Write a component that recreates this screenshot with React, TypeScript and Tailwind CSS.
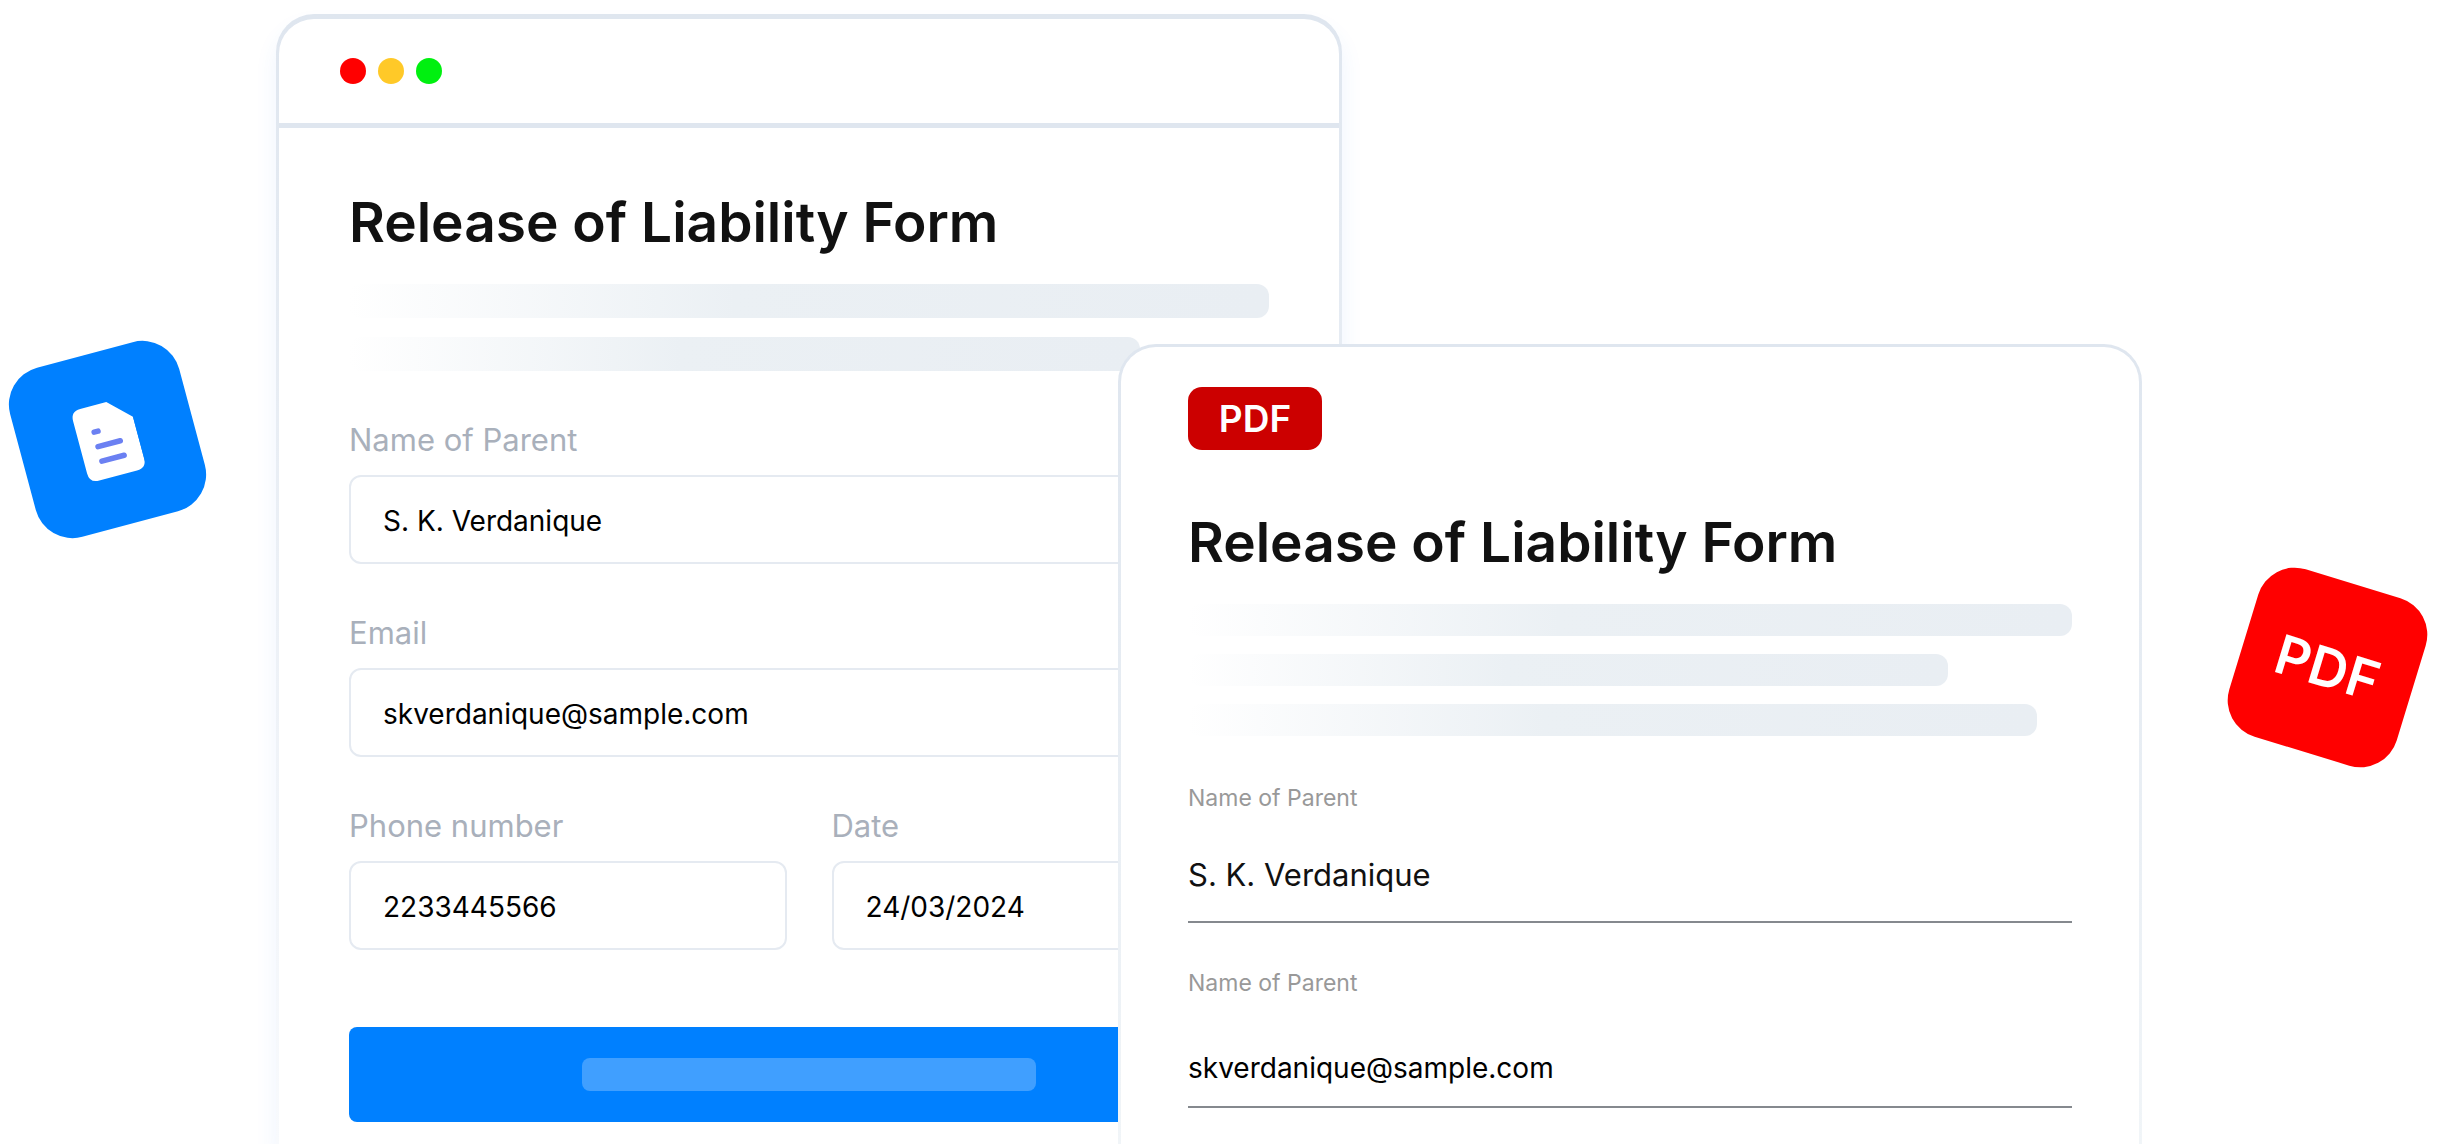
import type { ReactNode } from "react";

type FieldProps = {
  id: string;
  label: string;
  value: string;
};

function FormField({ id, label, value }: FieldProps) {
  return (
    <div className="flex min-w-0 flex-1 flex-col gap-[15px]">
      <label htmlFor={id} className="text-[31px] leading-10 text-[#a9b0bb]">
        {label}
      </label>
      <input
        id={id}
        type="text"
        defaultValue={value}
        className="h-[89px] w-full rounded-xl border-2 border-[#e5eaf1] bg-white px-8 pt-0.5 text-[28px] text-black outline-none"
      />
    </div>
  );
}

function PdfField({ id, label, value, className }: FieldProps & { className: string }) {
  return (
    <div className="flex flex-col">
      <label htmlFor={id} className="text-[23px] leading-8 text-[#999]">
        {label}
      </label>
      <input
        id={id}
        type="text"
        defaultValue={value}
        className={`h-[109px] w-full border-b-2 border-[#85898e] bg-transparent outline-none ${className}`}
      />
    </div>
  );
}

function Placeholder({ className }: { className: string }) {
  return (
    <div
      className={`rounded-xl bg-linear-to-r from-white via-[#ebf0f4] via-42% to-[#e9eef3] ${className}`}
    />
  );
}

function Tile({ className, children }: { className: string; children: ReactNode }) {
  return (
    <div
      className={`flex size-[175px] items-center justify-center rounded-[38px] ${className}`}
    >
      {children}
    </div>
  );
}

function DocumentIcon() {
  return (
    <svg viewBox="-30 -38 60 76" className="h-[76px] w-[60px]" aria-hidden="true">
      <path
        d="M-19 -37H8L30 -16V27Q30 37 20 37H-19Q-29 37 -29 27V-27Q-29 -37 -19 -37Z"
        fill="#fff"
      />
      <path
        d="M-11.5 -11H-7.5M-11.5 4H11.5M-11.5 19H11.5"
        stroke="#6b80f2"
        strokeWidth="5.5"
        strokeLinecap="round"
      />
    </svg>
  );
}

export default function App() {
  return (
    <main className="grid h-screen grid-cols-[276fr_842fr_224fr_800fr_295fr] grid-rows-1 overflow-hidden bg-white font-['Inter',sans-serif]">
      <div className="col-start-1 row-start-1 mt-[352px] ml-5">
        <Tile className="-rotate-15 bg-[#0080ff]">
          <DocumentIcon />
        </Tile>
      </div>

      {/* Browser window with the web form */}
      <section className="col-span-2 col-start-2 row-start-1 mt-3.5 rounded-t-[38px] bg-linear-to-b from-[#dfe6ef] to-[#f8fafd] px-[3px] pt-[5px] shadow-[0_14px_22px_#3b82f616]">
        <div className="h-full rounded-t-[35px] bg-white">
          <div className="flex h-[109px] items-center gap-3 border-b-5 border-[#dfe6ef] px-[61px]">
            <span className="size-[26px] rounded-full bg-[#ff0000]" />
            <span className="size-[26px] rounded-full bg-[#ffc928]" />
            <span className="size-[26px] rounded-full bg-[#00f010]" />
          </div>
          <form className="px-[70px] pt-[62px]">
            <h1 className="text-[55px] leading-16 font-semibold whitespace-nowrap text-[#111]">
              Release of Liability Form
            </h1>
            <div className="mt-[30px] flex flex-col gap-[19px]">
              <Placeholder className="h-[34px] w-full" />
              <Placeholder className="h-[34px] w-[86%]" />
            </div>
            <div className="mt-[49px] flex flex-col gap-[49px]">
              <FormField id="parent" label="Name of Parent" value="S. K. Verdanique" />
              <FormField id="email" label="Email" value="skverdanique@sample.com" />
              <div className="flex gap-[45px]">
                <FormField id="phone" label="Phone number" value="2233445566" />
                <FormField id="date" label="Date" value="24/03/2024" />
              </div>
            </div>
            <button
              type="button"
              aria-label="Submit"
              className="mt-[77px] flex h-[95px] w-full items-center justify-center rounded-lg bg-[#0080ff]"
            >
              <span className="h-[33px] w-[454px] rounded-lg bg-[#409fff]" />
            </button>
          </form>
        </div>
      </section>

      {/* Generated PDF, laid over the window */}
      <section className="z-10 col-span-2 col-start-3 row-start-1 mt-[344px] rounded-t-[38px] bg-linear-to-b from-[#dfe6ef] to-[#f1f5f8] px-[3px] pt-[3px]">
        <div className="h-full rounded-t-[35px] bg-white px-[67px] pt-10">
          <div className="flex h-[63px] w-[134px] items-center justify-center rounded-[14px] bg-[#cc0000] text-[37px] leading-none font-semibold text-white">
            PDF
          </div>
          <h2 className="mt-[60px] text-[55px] leading-16 font-semibold whitespace-nowrap text-[#111]">
            Release of Liability Form
          </h2>
          <div className="mt-[30px] flex flex-col gap-[18px]">
            <Placeholder className="h-8 w-full" />
            <Placeholder className="h-8 w-[86%]" />
            <Placeholder className="h-8 w-[96%]" />
          </div>
          <div className="mt-[46px] flex flex-col gap-11">
            <PdfField
              id="pdf-parent"
              label="Name of Parent"
              value="S. K. Verdanique"
              className="pt-3.5 text-[31px] text-[#111]"
            />
            <PdfField
              id="pdf-email"
              label="Name of Parent"
              value="skverdanique@sample.com"
              className="pt-7.5 text-[28px] text-black"
            />
          </div>
        </div>
      </section>

      <div className="col-start-5 row-start-1 mt-[580px] mr-[22px] flex justify-end">
        <Tile className="rotate-17 bg-[#ff0000] text-[54px] font-semibold text-white">PDF</Tile>
      </div>
    </main>
  );
}
